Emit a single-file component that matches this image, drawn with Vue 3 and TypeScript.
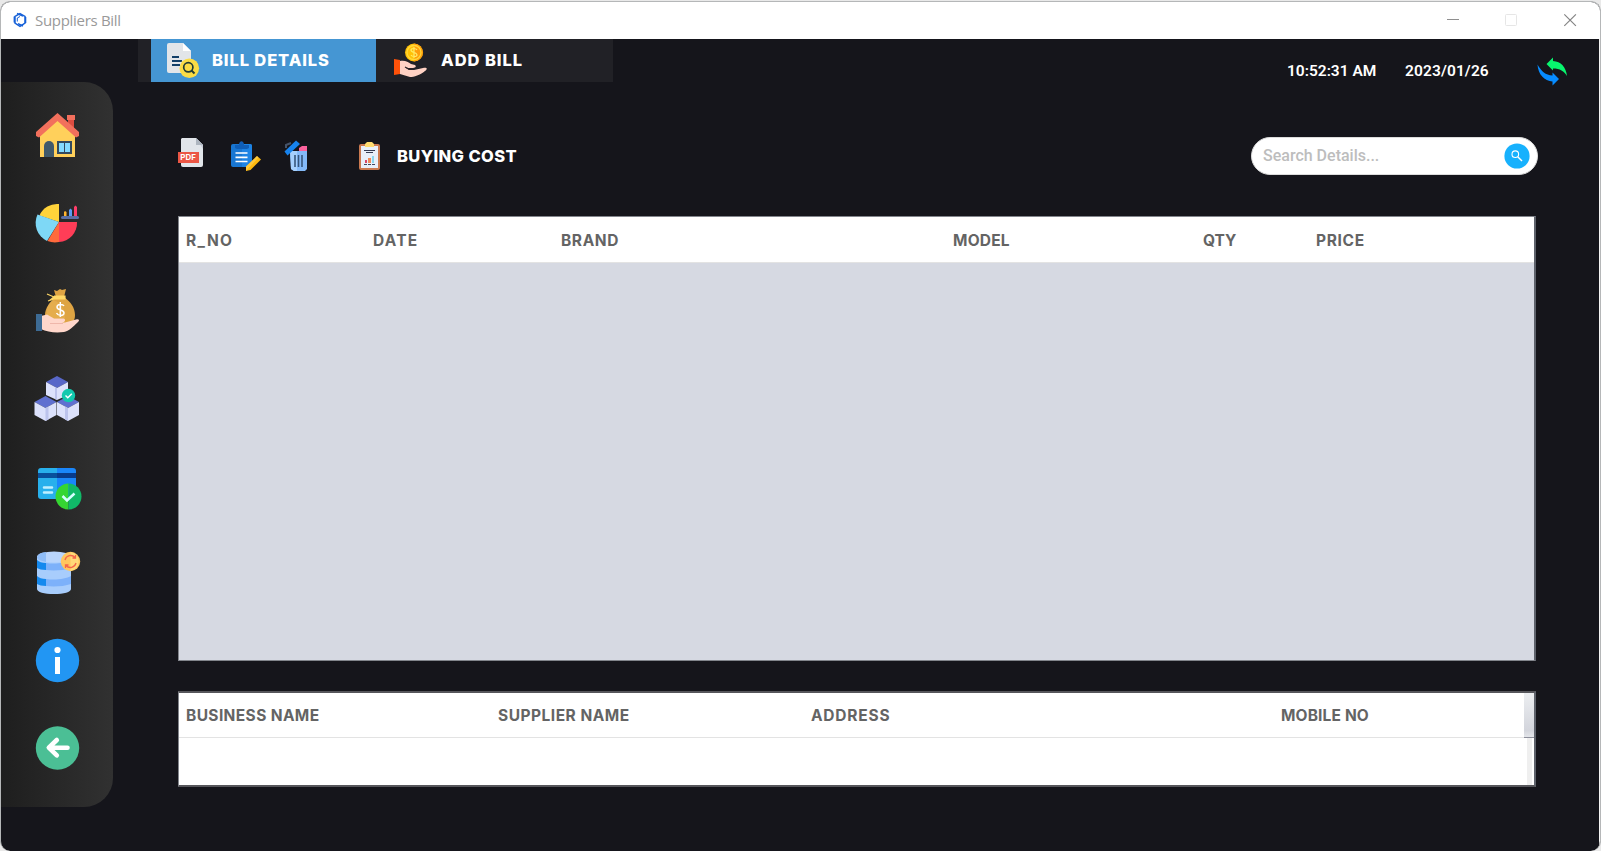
<script setup lang="ts">
import { ref } from 'vue'

interface Column {
  label: string
  cls: string
}

const billColumns: Column[] = [
  { label: 'R_NO', cls: 'rno' },
  { label: 'DATE', cls: 'date' },
  { label: 'BRAND', cls: 'brand' },
  { label: 'MODEL', cls: 'model' },
  { label: 'QTY', cls: 'qty' },
  { label: 'PRICE', cls: 'price' },
]

const supplierColumns: Column[] = [
  { label: 'BUSINESS NAME', cls: 'business' },
  { label: 'SUPPLIER NAME', cls: 'supplier' },
  { label: 'ADDRESS', cls: 'address' },
  { label: 'MOBILE NO', cls: 'mobile' },
]

const search = ref('')
</script>

<template>
  <div class="desktop">
    <div class="window">
      <header class="titlebar">
        <svg class="logo" width="16" height="16" viewBox="12 12 16 16" fill="none" stroke="#1560d8" stroke-width="1.5">
          <path d="M20 13.600l5 2.800v6.800l-5 3.200-5-3.200v-6.800z" />
          <path d="M17 13.500l6 2.600M25.600 17v6M23 26l-5-2.400M14.300 22.500v-6" stroke-width="1.400" />
          <path d="M17.300 21.500v-3.500l2.700-1.500" stroke-width="1" />
        </svg>
        <span class="title">Suppliers Bill</span>
        <svg class="controls" width="140" height="20" viewBox="1440 10 140 20" fill="none">
          <path d="M1447 19.5h12" stroke="#8f8f8f" />
          <rect x="1505.5" y="14.5" width="11" height="11" rx="1" stroke="#e6e6e6" />
          <path d="M1564.3 14.3l11.6 11.6M1575.9 14.3l-11.6 11.6" stroke="#858585" stroke-width="1.2" />
        </svg>
      </header>

      <div class="body">
        <div class="side-col">
          <nav class="sidebar">
            <svg viewBox="34 111 48 48">
              <path d="M67 115h8v3h-1v12l-6-5v-7h-1z" fill="#dc4d41" />
              <path d="M67 115h8v5h-8z" fill="#f26f5c" />
              <path d="M40 133l17.5-14L75 133v24H40z" fill="#ffd05b" />
              <path d="M44 157v-11a5 5 0 0 1 10 0v11z" fill="#40596b" />
              <path d="M57 141h15v13H57z" fill="#334a5e" />
              <path d="M59 143h5v9h-5zM65 143h5v9h-5z" fill="#84dbff" />
              <path d="M57.5 113l21.5 19v4l-3 1.500-18.500-16.500L39 137.500l-3-1.500v-4z" fill="#f2705c" />
            </svg>
            <svg viewBox="34 199 48 48">
              <path d="M59 222V204a19 19 0 0 0-19.500 11.500z" fill="#ffd33a" />
              <path d="M59 222l-21.500-7.500a20 20 0 0 0 9.500 26.500z" fill="#7ed8f6" />
              <path d="M59 222l-11.500 19a20 20 0 0 0 11.500 1z" fill="#ff6a3c" />
              <path d="M59 222h18a19 19 0 0 1-18 20z" fill="#ff3d57" />
              <rect x="61" y="216" width="18" height="3" rx="1.500" fill="#5a6fa5" />
              <path d="M64 216v-4l1-1 1.500 1v4z" fill="#ffb52e" />
              <path d="M69 216v-6l1.500-1.500 1.500 1.500v6z" fill="#5b9df5" />
              <path d="M74 216v-9l1.500-1.500 1.500 1.500v9z" fill="#ff3d6a" />
            </svg>
            <svg viewBox="34 287 48 48">
              <path d="M56 297l-2-7 3 1 3-2 2 1 4-1-2 8c7 5 11 11 11 18 0 6-3 10-7 10H52c-5 0-7-4-7-10 0-7 5-13 11-18z" fill="#dea443" />
              <path d="M52 300c-5 5-6 10-5 18h18c0-9-5-17-13-18z" fill="#edb95c" opacity=".45" />
              <path d="M54 296h11v3H54l-6 2M54 297l-7-3" fill="#ffd866" stroke="#ffd866" stroke-width="1.200" />
              <path d="M64 306c-1-2-7-2.500-7 1 0 4 7 2 7 6 0 3.500-6 3-7.500 0M60.300 302v15" fill="none" stroke="#fff" stroke-width="1.500" />
              <path d="M41 316l6-1.500 7 4h10c2 1 1 4-2 4h3l11-3c3-1 4 1 2 2.500-5 5-9 9-14 10-9 1-17 0-23-3z" fill="#ffd7cb" />
              <path d="M50 323.500h13" stroke="#efb7aa" stroke-width="1" />
              <rect x="36" y="314" width="6" height="17" fill="#3d6b94" />
            </svg>
            <svg viewBox="34 375 48 48">
              <path d="M57 376l11 6-11 6-11-6z" fill="#5867c8" />
              <path d="M46 382l11 6v12l-11-5zM68 382l-11 6v12l11-5z" fill="#dde2fc" />
              <path d="M57 388v12l-2-1v-12z" fill="#bcc3ec" />
              <path d="M45.500 396l11 6-11 6-11-6z" fill="#6070d0" />
              <path d="M34.500 402l11 6v13l-11-6zM56.500 402l-11 6v13l11-6z" fill="#dce1fb" />
              <path d="M45.500 408l3-1.500v13l-3 1.500z" fill="#bcc3ec" />
              <path d="M68 396l11 6-11 6-11-6z" fill="#6070d0" />
              <path d="M57 402l11 6v13l-11-6zM79 402l-11 6v13l11-6z" fill="#dce1fb" />
              <path d="M68 408l-3-1.500v13l3 1.500z" fill="#bcc3ec" />
              <circle cx="68.500" cy="395.500" r="6.700" fill="#12c9ae" />
              <path d="M65.500 395.500l2.300 2.300 4-4" fill="none" stroke="#fff" stroke-width="1.400" />
            </svg>
            <svg viewBox="34 463 48 48">
              <path d="M57 468h16a3 3 0 0 1 3 3v28H57z" fill="#1a86fa" />
              <path d="M57 468H41a3 3 0 0 0-3 3v25a3 3 0 0 0 3 3h16z" fill="#28b0ec" />
              <path d="M38 473h19v5H38z" fill="#08509c" />
              <path d="M57 473h19v5H57z" fill="#083b8b" />
              <path d="M44 487.500h8M44 492.500h8" stroke="#c0efff" stroke-width="2.500" stroke-linecap="round" />
              <path d="M68.500 483.500v26a13 13 0 0 1 0-26z" fill="#35d632" />
              <path d="M68.500 483.500v26a13 13 0 0 0 0-26z" fill="#10b968" />
              <path d="M62.500 496l4.500 4.500 7.500-7" fill="none" stroke="#d4ffff" stroke-width="2.500" />
            </svg>
            <svg viewBox="34 551 48 48">
              <path d="M37 556v33c0 3 7 5 17 5s17-2 17-5v-33z" fill="#a8cdfc" />
              <path d="M37 560c2 2 5 3 9 3v7c-4 0-7-1-9-2zM37 576c2 2 5 3 9 3v7c-4 0-7-1-9-2z" fill="#1589ee" />
              <path d="M46 563c9 1.500 20 0 25-3v8c-7 2.500-18 3-25 2zM46 579c9 1.500 20 0 25-3v8c-7 2.500-18 3-25 2z" fill="#7db1fa" />
              <ellipse cx="54" cy="557" rx="17" ry="5.500" fill="#b9d5fc" />
              <path d="M37 557c1-3 4-4.500 9-5v10c-6-1-9-3-9-5z" fill="#8fbdf8" />
              <circle cx="70.500" cy="561.500" r="9.700" fill="#ffc65e" />
              <path d="M70.500 552a9.600 9.600 0 0 1 0 19z" fill="#ffda78" />
              <path d="M65 560a5.800 5.800 0 0 1 10-2.500M76 563a5.800 5.800 0 0 1-10 2.500M75.500 555v3h-3M65.500 568v-3h3" fill="none" stroke="#f4664b" stroke-width="1.300" />
            </svg>
            <svg viewBox="34 639 48 48">
              <circle cx="57.500" cy="660.500" r="21.700" fill="#2296f3" />
              <circle cx="57.500" cy="650" r="3.100" fill="#fff" />
              <path d="M55 657h5v17h-5z" fill="#fff" />
            </svg>
            <svg viewBox="34 727 48 48">
              <circle cx="57.500" cy="748" r="21.700" fill="#4bbf95" />
              <path d="M67.500 747.700H49M56.800 740l-8 7.700 8 7.700" fill="none" stroke="#fff" stroke-width="4.600" stroke-linecap="round" stroke-linejoin="round" />
            </svg>
          </nav>
        </div>

        <main class="main">
          <div class="top">
            <div class="tabs">
              <div class="tab active">
                <svg width="36" height="39" viewBox="165 41 36 39">
                  <path d="M169 43h14l8 8v20a2 2 0 0 1-2 2h-20a2 2 0 0 1-2-2V45a2 2 0 0 1 2-2z" fill="#e2e5e9" />
                  <path d="M183 43l8 8h-8z" fill="#fff" />
                  <path d="M172 57h7M172 61h10M172 65h8" stroke="#123f68" stroke-width="1.800" />
                  <circle cx="189.300" cy="68.300" r="9.800" fill="#fbdc45" />
                  <circle cx="188.300" cy="67.300" r="4.600" fill="none" stroke="#233d35" stroke-width="1.700" />
                  <path d="M191.500 70.500l3 3" stroke="#233d35" stroke-width="2" />
                </svg>
                <span class="label details">BILL DETAILS</span>
              </div>
              <div class="tab">
                <svg width="36" height="39" viewBox="393 41 36 39">
                  <circle cx="414" cy="52.500" r="9" fill="#ffc107" />
                  <path d="M414 43.500a9 9 0 0 1 0 18z" fill="#ff9e0b" />
                  <circle cx="414" cy="52.500" r="7" fill="none" stroke="#ffd83a" stroke-width="1.300" />
                  <path d="M417 50c-1-2-6-2-6 0 0 3 6 2 6 5 0 2-5 2-6 0M414 47v11" fill="none" stroke="#ffeb65" stroke-width="1.200" />
                  <path d="M400 61c5-1 8 1 11 3l4 1c2 2 0 3-3 3h-6l3 2h5l9-2c4-1 5 1 2 3-5 4-11 6-15 6l-10-3z" fill="#ffd2c4" />
                  <path d="M405 67l4 2h5" fill="none" stroke="#2c2428" stroke-width="1.300" />
                  <path d="M394 59l6 1v14l-6 1z" fill="#ff5209" />
                </svg>
                <span class="label add">ADD BILL</span>
              </div>
            </div>
            <div class="clock">
              <span class="time">10:52:31 AM</span>
              <span class="day">2023/01/26</span>
              <svg width="32" height="32" viewBox="1537 56 32 32">
                <path d="M1546.500 65l6.500-6.500v3.500c8 .5 13 6 14 15-3-5-7-7.500-14-7.500v2z" fill="#08f56e" />
                <path d="M1559 80l-6.500 6.500v-4c-8-.5-14.500-7-15-17 4 7 8 10.500 15 11v-3z" fill="#078bff" />
              </svg>
            </div>
          </div>

          <div class="toolbar">
            <svg class="pdf" width="28" height="32" viewBox="177 137 28 32">
              <path d="M182 138h14l7 7v20a2 2 0 0 1-2 2h-18a2 2 0 0 1-2-2v-26z" fill="#e1e5ea" />
              <path d="M196 138l7 7v4z" fill="#c8cbd9" />
              <path d="M196 138v7h7z" fill="#adb5bf" />
              <path d="M178 152h21v11h-21z" fill="#eb5645" />
              <text x="180.300" y="160.300" class="pdf-text" textLength="15.500" lengthAdjust="spacingAndGlyphs">PDF</text>
            </svg>
            <svg class="edit" width="34" height="34" viewBox="229 139 34 34">
              <path d="M233 144h17a2 2 0 0 1 2 2v18l-3 3h-16a2 2 0 0 1-2-2v-19a2 2 0 0 1 2-2z" fill="#1876d2" />
              <path d="M242 144h8a2 2 0 0 1 2 2v18l-3 3h-7z" fill="#1d83e4" />
              <path d="M235 148v-3h4c0-5 5-5 5 0h5v3l-2 1h-10z" fill="#0f5eb8" />
              <path d="M235.500 153h12M235.500 157.300h12M235.500 161.500h12" stroke="#fff" stroke-width="1.700" />
              <path d="M257 156l4 3.500-10.500 10.500-4.500 1v-4.500z" fill="#fdb90e" />
              <path d="M257 156l1.500 1.500L247 170l-1 1v-4.500z" fill="#ffd45e" opacity=".6" />
            </svg>
            <svg class="trash" width="26" height="34" viewBox="284 139 26 34">
              <path d="M299 148l3-2h5v6h-8z" fill="#fb629d" />
              <path d="M290 151h17v18l-2 2h-11l-3-2z" fill="#84baf9" />
              <path d="M290 151h7v20h-3l-3-2z" fill="#a6d0fd" />
              <path d="M295 155v12M298.500 155v12M302 155v12" stroke="#36567b" stroke-width="1.600" />
              <path d="M284.500 151.500l11.500-11 4 3.500-12.500 11.500z" fill="#1783ee" />
              <path d="M286 148v-3l5-2" fill="none" stroke="#45536a" stroke-width="2" />
            </svg>
            <svg class="report" width="24" height="32" viewBox="358 140 24 32">
              <rect x="359" y="144" width="21" height="26" rx="2" fill="#ca7950" />
              <path d="M361 146h17v22h-17z" fill="#e8effa" />
              <path d="M365 144l2-2h5l2 2v3h-9z" fill="#ffdb70" />
              <path d="M364 150.500h11M366 152.500h7" stroke="#353b52" stroke-width="1.100" />
              <path d="M365 160h2v3h-2z" fill="#d74869" />
              <path d="M368 158h3v5h-3z" fill="#ef8b59" />
              <path d="M372 156h2v7h-2z" fill="#8ad7ef" />
              <path d="M364 164.500h11" stroke="#43465c" stroke-dasharray="3 1" />
            </svg>
            <span class="label cost">BUYING COST</span>
            <label class="search">
              <input v-model="search" type="text" placeholder="Search Details..." />
              <svg width="26" height="26" viewBox="1504 143 26 26">
                <circle cx="1517" cy="156" r="12.600" fill="#17b1fd" />
                <circle cx="1515.300" cy="154.200" r="3.300" fill="none" stroke="#fff" stroke-width="1.100" />
                <path d="M1518 157l4 4" stroke="#fff" stroke-width="1.500" />
              </svg>
            </label>
          </div>

          <section class="table bills">
            <div class="thead">
              <span v-for="c in billColumns" :key="c.label" :class="['th', c.cls]">{{ c.label }}</span>
            </div>
          </section>

          <section class="table suppliers">
            <div class="thead">
              <span v-for="c in supplierColumns" :key="c.label" :class="['th', c.cls]">{{ c.label }}</span>
              <i class="corner"></i>
            </div>
            <div class="rows"><i class="track"></i></div>
          </section>
        </main>
      </div>
    </div>
  </div>
</template>

<style>
body {
  margin: 0;
  overflow: hidden;
}
</style>

<style scoped>
.desktop {
  box-sizing: border-box;
  width: 1601px;
  height: 851px;
  padding-top: 1px;
  background: #e9e9e9;
  font-family: Inter, Roboto, sans-serif;
}
.window {
  box-sizing: border-box;
  height: 850px;
  border: 1px solid #b5b7b8;
  border-bottom: 0;
  border-radius: 10px;
  overflow: hidden;
  background: #15151b;
}
.titlebar {
  box-sizing: border-box;
  display: flex;
  align-items: center;
  height: 37px;
  padding: 0 20px 1px 11px;
  background: #fff;
}
.title {
  margin-left: 7px;
  font: 15px/20px 'Open Sans', sans-serif;
  letter-spacing: -0.3px;
  color: #999;
}
.controls {
  margin-left: auto;
}
.body {
  display: flex;
  height: 812px;
  border-right: 1px solid #f4f4f4;
}
.side-col {
  width: 137px;
  padding-top: 43px;
}
.sidebar {
  box-sizing: border-box;
  display: flex;
  flex-direction: column;
  gap: 40px;
  width: 112px;
  height: 725px;
  padding: 29px 0 0 33px;
  border-radius: 0 29px 29px 0;
  background: linear-gradient(90deg, #1e1e1e, #313131);
}
.sidebar svg {
  flex: none;
  width: 48px;
  height: 48px;
  overflow: visible;
}
.main {
  flex: 1;
}
.top {
  display: flex;
  justify-content: space-between;
  height: 43px;
}
.tabs {
  box-sizing: border-box;
  display: flex;
  width: 475px;
  padding-left: 13px;
  background: #212126;
}
.tab {
  box-sizing: border-box;
  display: flex;
  width: 225px;
  padding-left: 14px;
  align-items: center;
}
.tab + .tab {
  padding-left: 17px;
}
.active {
  background: #4596d3;
}
.label {
  font-size: 16.5px;
  font-weight: 800;
  line-height: 20px;
  color: #fff;
  white-space: nowrap;
}
.details {
  margin: 0 0 2px 11px;
  letter-spacing: 0.88px;
}
.add {
  margin: 0 0 2px 12px;
  letter-spacing: 0.95px;
}
.clock {
  display: flex;
  align-items: center;
  height: 64px;
  padding-right: 30px;
  font: 600 15.500px/20px Roboto, sans-serif;
  color: #fff;
}
.time {
  width: 118px;
}
.day {
  width: 132px;
  letter-spacing: 0.12px;
}
.toolbar {
  display: flex;
  height: 38px;
  margin-top: 55px;
  padding-left: 39px;
  align-items: center;
}
.toolbar svg {
  flex: none;
}
.pdf {
  margin-top: -6px;
}
.pdf-text {
  font: 700 7.500px Inter, sans-serif;
  fill: #fff;
}
.edit {
  margin-left: 24px;
}
.trash {
  margin-left: 21px;
}
.report {
  margin-left: 48px;
}
.cost {
  margin-left: 15px;
  letter-spacing: 0.38px;
}
.search {
  box-sizing: border-box;
  display: flex;
  align-items: center;
  width: 287px;
  height: 38px;
  margin-left: auto;
  margin-right: 61px;
  padding: 0 7px 0 11px;
  border: 1px solid #dcdcdc;
  border-radius: 19px;
  background: #fff;
}
.search input {
  flex: 1;
  min-width: 0;
  padding: 0;
  border: 0;
  outline: 0;
  background: none;
  font: 500 16px/20px Roboto, sans-serif;
  color: #555;
}
.search input::placeholder {
  color: #bdbdbd;
  opacity: 1;
}
.table {
  box-sizing: border-box;
  width: 1358px;
  margin-left: 40px;
  border: 1px solid #82858c;
  border-right: 2px solid #5e626b;
  background: #fff;
}
.thead {
  box-sizing: border-box;
  display: flex;
  align-items: center;
  height: 46px;
  padding-left: 7px;
  border-bottom: 1px solid #e3e3e3;
}
.th {
  flex: none;
  font-size: 15.500px;
  font-weight: 700;
  line-height: 20px;
  color: #646464;
  white-space: nowrap;
}
.bills {
  height: 445px;
  margin-top: 41px;
  background: #d6d9e2;
}
.bills .thead {
  padding-top: 2px;
  background: #fff;
}
.rno {
  width: 187px;
  letter-spacing: 1.4px;
}
.date {
  width: 188px;
  letter-spacing: 1.2px;
}
.brand {
  width: 392px;
  letter-spacing: 0.6px;
}
.model {
  width: 250px;
  letter-spacing: 0.2px;
}
.qty {
  width: 113px;
}
.price {
  letter-spacing: 0.65px;
}
.suppliers {
  height: 96px;
  margin-top: 30px;
  border-width: 2px 2px 2px 1px;
  border-color: #56565b #5e626b #56565b #82858c;
}
.suppliers .thead {
  height: 45px;
}
.suppliers .th {
  padding-top: 1px;
}
.business {
  width: 312px;
  letter-spacing: 0.38px;
}
.supplier {
  width: 313px;
  letter-spacing: 0.5px;
}
.address {
  width: 470px;
  letter-spacing: 0.8px;
}
.mobile {
  letter-spacing: 0.15px;
}
.corner {
  width: 10px;
  height: 44px;
  margin-left: auto;
  border-bottom: 1px solid #8d8f9b;
  background: linear-gradient(#eceef1, #d3d5dc 85%, #e4e6ea);
}
.rows {
  display: flex;
  justify-content: flex-end;
  height: 47px;
  padding-right: 2px;
}
.track {
  width: 5px;
  background: #efefef;
}
</style>
